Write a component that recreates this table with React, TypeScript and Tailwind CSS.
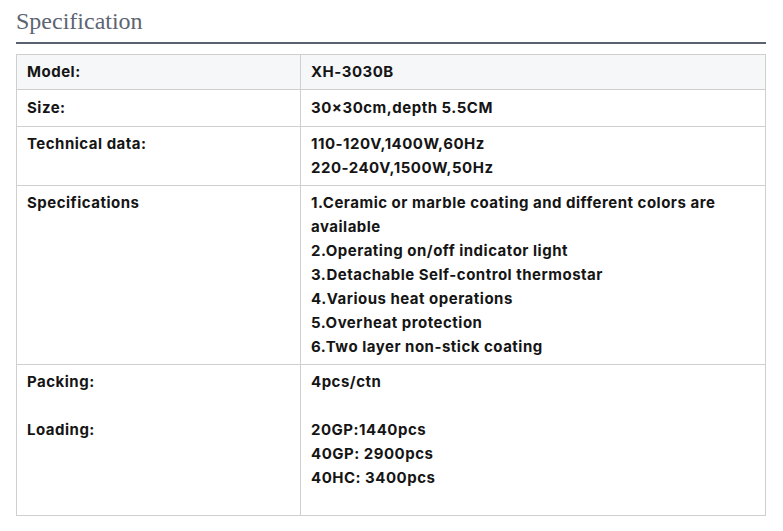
import React from "react";

const rows: { label: string[]; value: string[]; head?: boolean }[] = [
  { label: ["Model:"], value: ["XH-3030B"], head: true },
  { label: ["Size:"], value: ["30×30cm,depth 5.5CM"] },
  { label: ["Technical data:"], value: ["110-120V,1400W,60Hz", "220-240V,1500W,50Hz"] },
  {
    label: ["Specifications"],
    value: [
      "1.Ceramic or marble coating and different colors are available",
      "2.Operating on/off indicator light",
      "3.Detachable Self-control thermostar",
      "4.Various heat operations",
      "5.Overheat protection",
      "6.Two layer non-stick coating",
    ],
  },
  {
    label: ["Packing:", "", "Loading:"],
    value: ["4pcs/ctn", "", "20GP:1440pcs", "40GP: 2900pcs", "40HC: 3400pcs"],
  },
];

const padFor = (i: number) => {
  if (i === 1) return "pt-[6px] pb-[6px]";
  if (i === 4) return "pt-[5px] pb-[25px]";
  return "py-[5px]";
};

export default function App() {
  return (
    <div className="min-h-screen bg-white pl-4 pr-[17px] pt-[5px]">
      {/* Section title */}
      <h2
        className="text-[24px] leading-[32px] text-[#5d6472] font-normal pb-[5px] border-b-2 border-[#5b6170]"
        style={{ fontFamily: "'Liberation Serif', serif" }}
      >
        Specification
      </h2>

      {/* Spec table */}
      <table
        className="mt-[10px] w-full border-collapse text-[15px] leading-[24px] font-bold tracking-[0.5px] text-[#151515]"
        style={{ fontFamily: "Inter, 'Liberation Sans', sans-serif" }}
      >
        <tbody>
          {rows.map((row, i) => (
            <tr key={i} className={row.head ? "bg-[#f6f7f9]" : "bg-white"}>
              <td className={`w-[284px] border border-[#cfcfcf] px-[10px] align-top ${i === 4 ? "py-[5px]" : padFor(i)}`}>
                {row.label.map((l, j) => (
                  <div key={j} className="h-[24px]">
                    {l}
                  </div>
                ))}
              </td>
              <td className={`border border-[#cfcfcf] px-[10px] align-top ${padFor(i)}`}>
                {row.value.map((v, j) => (
                  <div key={j} className="min-h-[24px]">
                    {v}
                  </div>
                ))}
              </td>
            </tr>
          ))}
        </tbody>
      </table>
    </div>
  );
}
